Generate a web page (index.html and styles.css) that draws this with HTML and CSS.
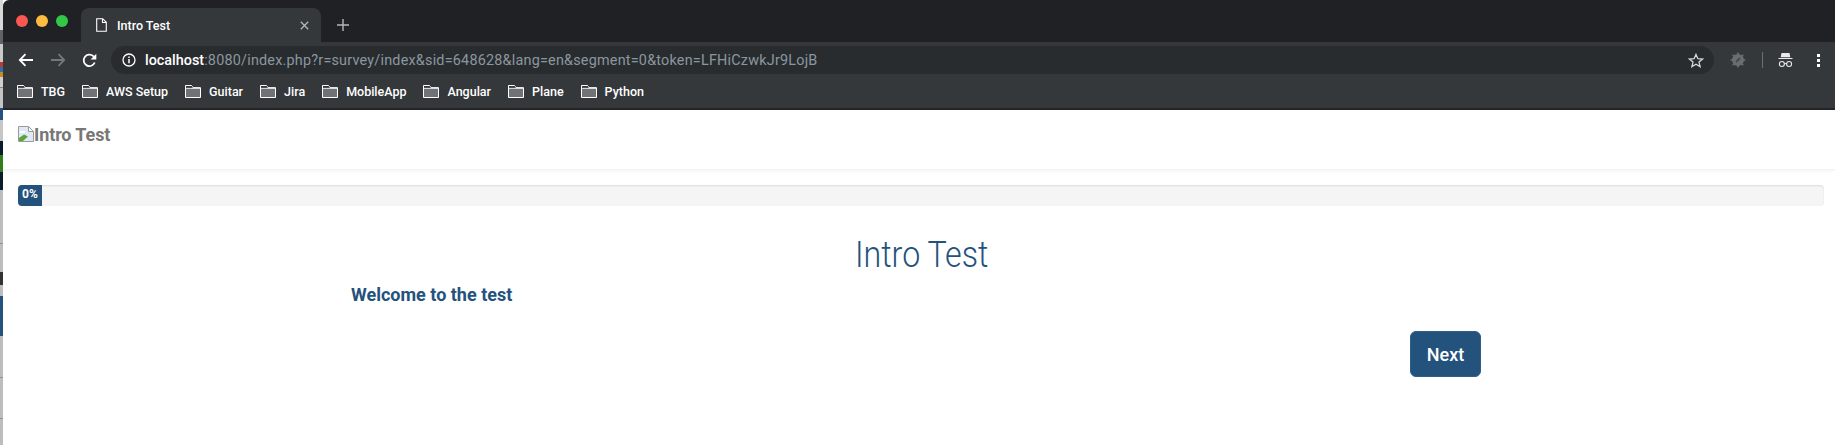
FILE: index.html
```html
<!DOCTYPE html>
<html lang="en">
<head>
<meta charset="utf-8">
<title>Intro Test</title>
<link rel="stylesheet" href="styles.css">
</head>
<body>
<svg class="defs" width="0" height="0"><defs><g id="fld"><path d="M.5 12.500V.5h6l1.500 2.200h7.500v9.800z" fill="#6f7276" stroke="#fff"/><path d="M.5 3.200h15" stroke="#fff"/><path d="M1 1h5.500l1.300 1.800H1z" fill="#33373a"/></g></defs></svg>
<div class="desktop">
  <div class="backdrop"></div>
  <div class="window">
    <header class="tabstrip">
      <div class="lights"><i class="red"></i><i class="amber"></i><i class="green"></i></div>
      <div class="tab">
        <svg class="tab-doc" viewBox="0 0 11 14" width="11" height="14"><path d="M.7.7h6l3.600 3.600v9H.7zM6.500.7v3.800h3.800" fill="none" stroke="#fff" stroke-width="1.100"/></svg>
        <span class="tab-title">Intro Test</span>
        <svg class="tab-x" viewBox="0 0 9 9" width="9" height="9"><path d="M.8.8l7.400 7.400M8.200.8L.8 8.200" stroke="#b4b7ba" stroke-width="1.300"/></svg>
      </div>
      <svg class="newtab" viewBox="0 0 12 12" width="12" height="12"><path d="M6 0v12M0 6h12" stroke="#b4b7ba" stroke-width="1.400"/></svg>
    </header>
    <div class="toolbar">
      <svg class="back" viewBox="0 0 16 14" width="16" height="14"><path d="M15 7H2M7.500 1.200L1.800 7l5.700 5.800" fill="none" stroke="#fff" stroke-width="1.800"/></svg>
      <svg class="fwd" viewBox="0 0 16 14" width="16" height="14"><path d="M1 7h13M8.500 1.200L14.200 7l-5.700 5.800" fill="none" stroke="#75787b" stroke-width="1.800"/></svg>
      <svg class="reload" viewBox="0 0 15 15" width="15" height="15"><path d="M12.700 9.500A5.700 5.700 0 1 1 11.300 3.200L13.200 5" fill="none" stroke="#fff" stroke-width="1.800"/><path d="M14.300.8v5.700H8.600z" fill="#fff"/></svg>
      <div class="omnibox">
        <svg class="info" viewBox="0 0 14 14" width="14" height="14"><circle cx="7" cy="7" r="6" fill="none" stroke="#fff" stroke-width="1.300"/><path d="M7 6v4.200M7 3.500v1.500" stroke="#fff" stroke-width="1.500"/></svg>
        <span class="url"><b>localhost</b>:8080/index.php?r=survey/index&amp;sid=648628&amp;lang=en&amp;segment=0&amp;token=LFHiCzwkJr9LojB</span>
        <svg class="star" viewBox="0 0 16 15" width="16" height="15"><path d="M8 1.400l1.900 4.300 4.600.4-3.500 3 1.100 4.500L8 11.200l-4.100 2.400L5 9.100l-3.500-3 4.600-.4z" fill="none" stroke="#d5d7d9" stroke-width="1.300"/></svg>
      </div>
      <svg class="ext" viewBox="0 0 16 16" width="16" height="16"><circle cx="8" cy="8" r="6" fill="#6b6e70"/><path d="M8 .6v2M8 13.400v2M.6 8h2M13.400 8h2M2.800 2.800l1.400 1.400M11.800 11.800l1.400 1.400M13.200 2.800l-1.400 1.400M4.200 11.800l-1.400 1.400" stroke="#6b6e70" stroke-width="1.600"/><path d="M6 10l4-4" stroke="#46494b" stroke-width="2"/></svg>
      <i class="divider"></i>
      <svg class="incog" viewBox="0 0 15 15" width="15" height="15"><path d="M3.500 0h8l.8 4.200H2.700zM.5 5h14v1.100H.5z" fill="#e8e9ea"/><circle cx="3.900" cy="11" r="2.500" fill="none" stroke="#e8e9ea" stroke-width="1.100"/><circle cx="11.100" cy="11" r="2.500" fill="none" stroke="#e8e9ea" stroke-width="1.100"/><path d="M6.400 10.600h2.200" stroke="#e8e9ea"/></svg>
      <div class="kebab"><i></i><i></i><i></i></div>
    </div>
    <nav class="bookmarks">
      <a class="bm"><svg viewBox="0 0 16 13" width="16" height="13"><use href="#fld"/></svg>TBG</a>
      <a class="bm"><svg viewBox="0 0 16 13" width="16" height="13"><use href="#fld"/></svg>AWS Setup</a>
      <a class="bm"><svg viewBox="0 0 16 13" width="16" height="13"><use href="#fld"/></svg>Guitar</a>
      <a class="bm"><svg viewBox="0 0 16 13" width="16" height="13"><use href="#fld"/></svg>Jira</a>
      <a class="bm"><svg viewBox="0 0 16 13" width="16" height="13"><use href="#fld"/></svg>MobileApp</a>
      <a class="bm"><svg viewBox="0 0 16 13" width="16" height="13"><use href="#fld"/></svg>Angular</a>
      <a class="bm"><svg viewBox="0 0 16 13" width="16" height="13"><use href="#fld"/></svg>Plane</a>
      <a class="bm"><svg viewBox="0 0 16 13" width="16" height="13"><use href="#fld"/></svg>Python</a>
    </nav>
    <main class="page">
      <div class="brand">
        <svg class="broken" viewBox="0 0 16 16" width="16" height="16"><path d="M.5.500h10l5 5v10H.5z" fill="#dfe8f8" stroke="#9a9a9a"/><path d="M10.500.500v5h5z" fill="#fff" stroke="#9a9a9a"/><path d="M1 15v-3l5-3.500 4 2-5 4.500z" fill="#5aa53c"/><path d="M2 5h5v2H2z" fill="#fff"/></svg><span class="brand-text">Intro Test</span>
      </div>
      <div class="progress"><div class="bar">0%</div></div>
      <div class="survey">
        <h1 class="title"><span class="title-text">Intro Test</span></h1>
        <p class="welcome">Welcome to the test</p>
        <div class="actions"><button class="next" type="button">Next</button></div>
      </div>
    </main>
  </div>
</div>
</body>
</html>
```

FILE: styles.css
```css
* { box-sizing: border-box; }
html, body { margin: 0; height: 100%; background: #fff; overflow: hidden; }
body { font-family: Roboto, "Liberation Sans", Arial, sans-serif; }
.defs { position: absolute; }
.desktop { display: flex; width: 1835px; height: 445px; }
.backdrop {
  width: 3px; flex: none;
  background: linear-gradient(to bottom,
    #d8d8d8 0 30px, #5f6367 30px 44px, #c9c9c9 44px 62px,
    #c0392b 62px 67px, #2f6fb5 67px 72px, #c98a1e 72px 77px,
    #cfcfcf 77px 87px, #888 87px 88px, #c4c4c4 88px 108px,
    #24527c 108px 120px, #c6c6c6 120px 141px, #0b1d2b 141px 155px,
    #2f7d1c 155px 172px, #0b1d2b 172px 190px, #bdbdbd 190px 243px,
    #909090 243px 244px, #bdbdbd 244px 272px, #333 272px 285px,
    #bdbdbd 285px 296px, #24527c 296px 336px, #bdbdbd 336px 377px,
    #909090 377px 378px, #bdbdbd 378px 418px, #909090 418px 419px, #bdbdbd 419px);
}
.window { flex: 1; min-width: 0; display: flex; flex-direction: column; border-radius: 6px 0 0 0; overflow: hidden; }
.tabstrip { height: 42px; flex: none; background: #202124; display: flex; align-items: flex-end; }
.lights { display: flex; gap: 8px; padding: 0 0 15px 13px; width: 78px; flex: none; }
.lights i { width: 12px; height: 12px; border-radius: 50%; }
.red { background: #fc5753; }
.amber { background: #fdbc40; }
.green { background: #33c748; }
.tab { width: 240px; height: 34px; background: #35383b; border-radius: 8px 8px 0 0; display: flex; align-items: center; padding: 0 12px 0 15px; flex: none; }
.tab-title { color: #fff; font-size: 12.5px; font-weight: 500; margin-left: 10px; flex: 1; }
.newtab { margin: 0 0 11px 16px; }
.toolbar { height: 32px; flex: none; background: #35383b; display: flex; align-items: center; padding: 4px 0 0 15px; }
.toolbar svg { flex: none; }
.fwd, .reload { margin-left: 16px; }
.omnibox { margin-left: 14px; width: 1603px; height: 28px; border-radius: 14px; background: #292c2f; display: flex; align-items: center; padding: 0 10px 0 11px; flex: none; }
.url { flex: 1; color: #8b979f; font-size: 14.4px; letter-spacing: .21px; margin-left: 9px; white-space: nowrap; }
.url b { color: #fff; font-weight: 500; letter-spacing: 0; }
.ext { margin-left: 16px; }
.divider { width: 1px; height: 16px; background: #6d7073; margin-left: 16px; flex: none; }
.incog { margin-left: 15px; }
.kebab { margin-left: 24px; display: flex; flex-direction: column; gap: 2px; }
.kebab i { width: 3px; height: 3px; background: #fff; display: block; }
.bookmarks { height: 36px; flex: none; background: #35383b; border-bottom: 2px solid #232527; display: flex; align-items: center; padding: 1px 0 0 14px; gap: 17px; }
.bm { display: flex; align-items: center; gap: 8px; color: #fff; font-size: 12.5px; font-weight: 500; }
.page { flex: 1; background: #fff; display: flex; flex-direction: column; }
.brand { height: 60px; padding: 16px 15px 0; flex: none; display: flex; align-items: flex-start; border-bottom: 1px solid #f3f3f3; box-shadow: 0 1px 4px rgba(0,0,0,.05); }
.broken { flex: none; }
.brand-text { color: #777; font-size: 18px; font-weight: 700; line-height: 17px; letter-spacing: -.1px; }
.progress { margin: 15px 11px 0 15px; height: 21px; background: #f5f5f5; border-radius: 4px; box-shadow: inset 0 1px 2px rgba(0,0,0,.1); flex: none; overflow: hidden; }
.bar { width: 24px; height: 100%; background: #23527c; color: #fff; font-size: 12px; font-weight: 700; line-height: 18px; text-align: center; }
.survey { padding: 0 10px 0 15px; }
.title { margin: 29px 0 0; font-weight: 300; font-size: 37px; line-height: 40px; color: #23527c; text-align: center; }
.title-text { display: inline-block; transform: scaleX(.87); }
.welcome { margin: 9px 0 0 333px; font-weight: 700; font-size: 18px; line-height: 22px; color: #23527c; }
.actions { display: flex; justify-content: flex-end; margin: 25px 344px 0 0; }
.next { width: 71px; height: 46px; background: #23527c; color: #fff; border: 1px solid #2e5f8c; border-radius: 6px; font-family: Roboto, sans-serif; font-size: 18px; font-weight: 500; padding: 0; }
```
